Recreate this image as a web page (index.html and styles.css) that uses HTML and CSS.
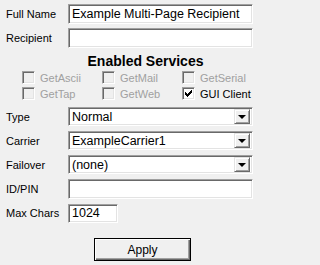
FILE: index.html
```html
<!DOCTYPE html>
<html>
<head>
<meta charset="utf-8">
<link rel="stylesheet" href="styles.css">
</head>
<body>
<div class="form">
  <div class="row">
    <label class="lbl">Full Name</label>
    <div class="edit">Example Multi-Page Recipient</div>
  </div>
  <div class="row">
    <label class="lbl">Recipient</label>
    <div class="edit"></div>
  </div>
  <div class="heading">Enabled Services</div>
  <div class="checks">
    <div class="chk disabled"><span class="box"></span><span>GetAscii</span></div>
    <div class="chk disabled"><span class="box"></span><span>GetMail</span></div>
    <div class="chk disabled"><span class="box"></span><span>GetSerial</span></div>
    <div class="chk disabled"><span class="box"></span><span>GetTap</span></div>
    <div class="chk disabled"><span class="box"></span><span>GetWeb</span></div>
    <div class="chk"><span class="box checked"><svg width="7" height="7" viewBox="0 0 7 7"><path d="M0 2h1v1h1v1h1v-1h1v-1h1v-1h1v-1h1v3h-1v1h-1v1h-1v1h-1v1h-1v-1h-1v-1h-1z" fill="#000"/></svg></span><span>GUI Client</span></div>
  </div>
  <div class="row sel-row">
    <label class="lbl">Type</label>
    <div class="edit select"><span class="val">Normal</span><span class="btn"><span class="tri"></span></span></div>
  </div>
  <div class="row sel-row">
    <label class="lbl">Carrier</label>
    <div class="edit select"><span class="val">ExampleCarrier1</span><span class="btn"><span class="tri"></span></span></div>
  </div>
  <div class="row sel-row">
    <label class="lbl">Failover</label>
    <div class="edit select"><span class="val">(none)</span><span class="btn"><span class="tri"></span></span></div>
  </div>
  <div class="row">
    <label class="lbl">ID/PIN</label>
    <div class="edit"></div>
  </div>
  <div class="row">
    <label class="lbl">Max Chars</label>
    <div class="edit short">1024</div>
  </div>
  <div class="actions">
    <div class="button">Apply</div>
  </div>
</div>
</body>
</html>
```
FILE: styles.css
```css
html, body {
  margin: 0;
  padding: 0;
  background: #f0f0f0;
}
body {
  font-family: "Liberation Sans", Arial, sans-serif;
  font-size: 11px;
  color: #000;
  width: 257px;
  height: 265px;
  overflow: hidden;
}
.form {
  padding: 4px 4px 0 6px;
}
.row {
  display: flex;
  align-items: center;
  height: 20px;
  margin-bottom: 4px;
}
.sel-row {
  height: 19px;
  margin-bottom: 5px;
}
.lbl {
  width: 62px;
  flex: none;
  font-size: 11px;
}
.edit {
  flex: 1;
  height: 100%;
  box-sizing: border-box;
  background: #fff;
  border-top: 1px solid #a0a0a0;
  border-left: 1px solid #a0a0a0;
  border-right: 1px solid #fff;
  border-bottom: 1px solid #fff;
  box-shadow: inset 1px 1px 0 #696969, inset -1px -1px 0 #e3e3e3;
  padding: 0 3px;
  display: flex;
  align-items: center;
  font-size: 12.5px;
  white-space: nowrap;
  overflow: hidden;
}
.edit.short {
  flex: none;
  width: 50px;
  height: 19px;
}
.select {
  padding: 0 2px 0 3px;
}
.select .val {
  flex: 1;
}
.btn {
  flex: none;
  width: 16px;
  height: 15px;
  box-sizing: border-box;
  background: #f0f0f0;
  border-top: 1px solid #e3e3e3;
  border-left: 1px solid #e3e3e3;
  border-right: 1px solid #696969;
  border-bottom: 1px solid #696969;
  box-shadow: inset 1px 1px 0 #fff, inset -1px -1px 0 #a0a0a0;
  display: flex;
  align-items: center;
  justify-content: center;
}
.tri {
  width: 0;
  height: 0;
  border-left: 4px solid transparent;
  border-right: 4px solid transparent;
  border-top: 4px solid #000;
  margin-top: 1px;
}
.heading {
  text-align: center;
  font-weight: bold;
  font-size: 14px;
  padding-left: 32px;
  height: 18px;
  line-height: 18px;
  margin-top: 1px;
}
.checks {
  display: grid;
  grid-template-columns: 80px 80px 70px;
  row-gap: 3px;
  padding-left: 16px;
  margin-top: 1px;
  margin-bottom: 7px;
}
.chk {
  display: flex;
  align-items: center;
  height: 13px;
  font-size: 11px;
  gap: 5px;
}
.chk.disabled {
  color: #a0a0a0;
}
.box {
  width: 13px;
  height: 13px;
  box-sizing: border-box;
  border-top: 1px solid #a0a0a0;
  border-left: 1px solid #a0a0a0;
  border-right: 1px solid #fff;
  border-bottom: 1px solid #fff;
  box-shadow: inset 1px 1px 0 #696969, inset -1px -1px 0 #e3e3e3;
  background: #f0f0f0;
  display: flex;
  align-items: center;
  justify-content: center;
}
.box.checked {
  background: #fff;
}
.actions {
  display: flex;
  padding-left: 88px;
  margin-top: 15px;
}
.button {
  width: 97px;
  height: 23px;
  box-sizing: border-box;
  border: 1px solid #000;
  box-shadow: inset 1px 1px 0 #fff, inset -1px -1px 0 #696969, inset -2px -2px 0 #a0a0a0;
  display: flex;
  align-items: center;
  justify-content: center;
  font-size: 12px;
}
```
